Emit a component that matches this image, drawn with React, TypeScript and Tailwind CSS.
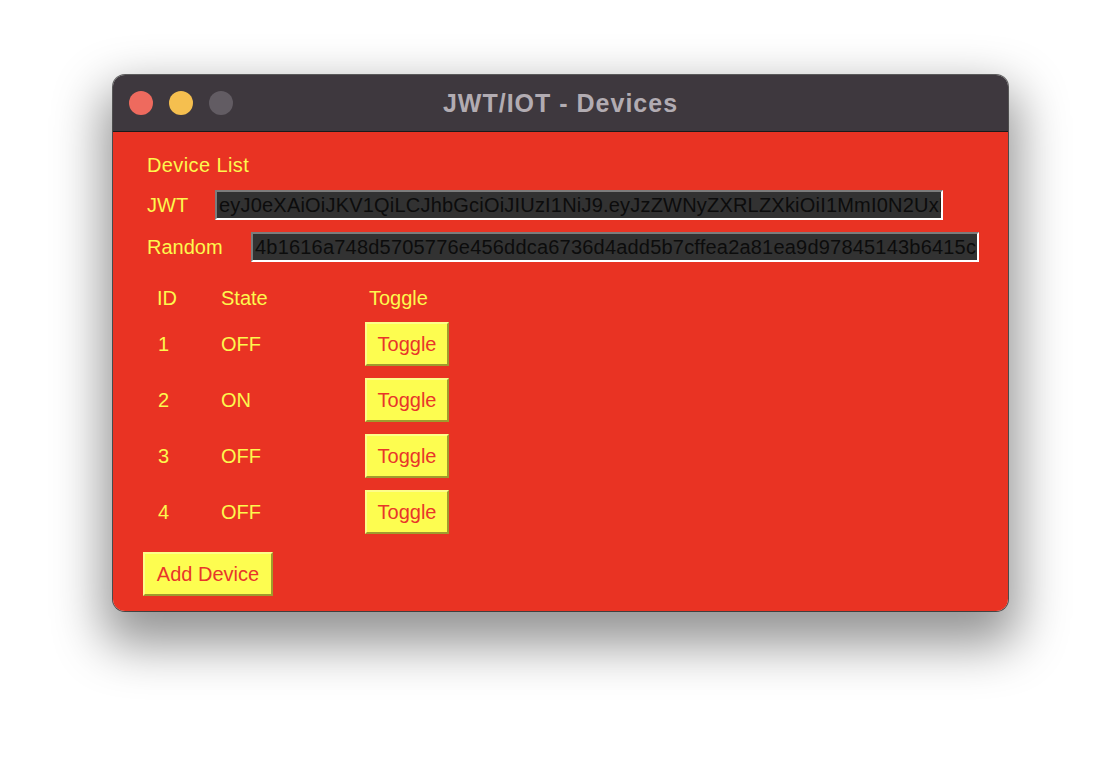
import { useState } from 'react';

const JWT_TOKEN =
  'eyJ0eXAiOiJKV1QiLCJhbGciOiJIUzI1NiJ9.eyJzZWNyZXRLZXkiOiI1MmI0N2UxNjE2YTc0OGQ1NzA1Nzc2ZTQ1NiJ9';
const RANDOM_KEY = '4b1616a748d5705776e456ddca6736d4add5b7cffea2a81ea9d97845143b6415c2e1';

const font = "font-['Liberation_Sans',Arial,sans-serif]";

const TkButton = ({ label, onClick, className = '' }: { label: string; onClick?: () => void; className?: string }) => (
  <button
    onClick={onClick}
    className={`h-[44px] bg-[#fdfd50] text-[#e8352a] text-[20px] leading-none border-2 border-t-[#fdfd8a] border-l-[#fdfd8a] border-b-[#a09b2e] border-r-[#a09b2e] ${className}`}
  >
    {label}
  </button>
);

const TkEntry = ({ value }: { value: string }) => (
  <input
    readOnly
    value={value}
    className={`w-[728px] h-[30px] bg-[#323232] text-[#0c0c0c] text-[20px] tracking-[0.2px] pl-[2px] outline-none border-2 border-t-[#7c7c7c] border-l-[#7c7c7c] border-b-white border-r-white ${font}`}
  />
);

const App = () => {
  const [devices, setDevices] = useState([
    { id: 1, on: false },
    { id: 2, on: true },
    { id: 3, on: false },
    { id: 4, on: false },
  ]);

  const toggle = (id: number) =>
    setDevices((ds) => ds.map((d) => (d.id === id ? { ...d, on: !d.on } : d)));

  const addDevice = () => setDevices((ds) => [...ds, { id: ds.length + 1, on: false }]);

  return (
    <div className={`w-[1120px] h-[760px] bg-white flex justify-center pt-[75px] pl-[1px] ${font}`}>
      <div className="w-[895px] self-start rounded-[12px] overflow-hidden ring-1 ring-black/60 shadow-[0_24px_50px_10px_rgba(0,0,0,0.42)]">
        {/* title bar */}
        <div className="h-[57px] bg-[#3e383e] border-b border-[#1a1a1a] grid grid-cols-[1fr_auto_1fr] items-center">
          <div className="flex items-center gap-[16px] pl-[16px]">
            <span className="w-[24px] h-[24px] rounded-full bg-[#ee6a5e]" />
            <span className="w-[24px] h-[24px] rounded-full bg-[#f5bf4f]" />
            <span className="w-[24px] h-[24px] rounded-full bg-[#625c63]" />
          </div>
          <div className="text-[#b2acb2] text-[25px] font-bold tracking-[1px] pt-[1px]">JWT/IOT - Devices</div>
          <div />
        </div>

        {/* body */}
        <div className="bg-[#e93323] text-[#fdf84e] text-[20px] pl-[34px] pt-[21px] pb-[15px]">
          <div className="h-[24px] leading-[24px] tracking-[0.4px]">Device List</div>

          <div className="flex items-center h-[30px] mt-[13px]">
            <span className="w-[68px]">JWT</span>
            <TkEntry value={JWT_TOKEN} />
          </div>
          <div className="flex items-center h-[30px] mt-[12px]">
            <span className="w-[104px]">Random</span>
            <TkEntry value={RANDOM_KEY} />
          </div>

          <div className="grid grid-cols-[64px_144px_auto] ml-[10px] mt-[21px] h-[24px] items-center">
            <span>ID</span>
            <span>State</span>
            <span className="pl-[4px]">Toggle</span>
          </div>

          <div className="flex flex-col gap-[12px] mt-[15px]">
            {devices.map((d) => (
              <div key={d.id} className="grid grid-cols-[64px_144px_auto] ml-[10px] items-center h-[44px]">
                <span className="pl-[1px]">{d.id}</span>
                <span>{d.on ? 'ON' : 'OFF'}</span>
                <TkButton label="Toggle" onClick={() => toggle(d.id)} className="w-[84px]" />
              </div>
            ))}
          </div>

          <TkButton label="Add Device" onClick={addDevice} className="w-[130px] -ml-[4px] mt-[18px]" />
        </div>
      </div>
    </div>
  );
};

export default App;
